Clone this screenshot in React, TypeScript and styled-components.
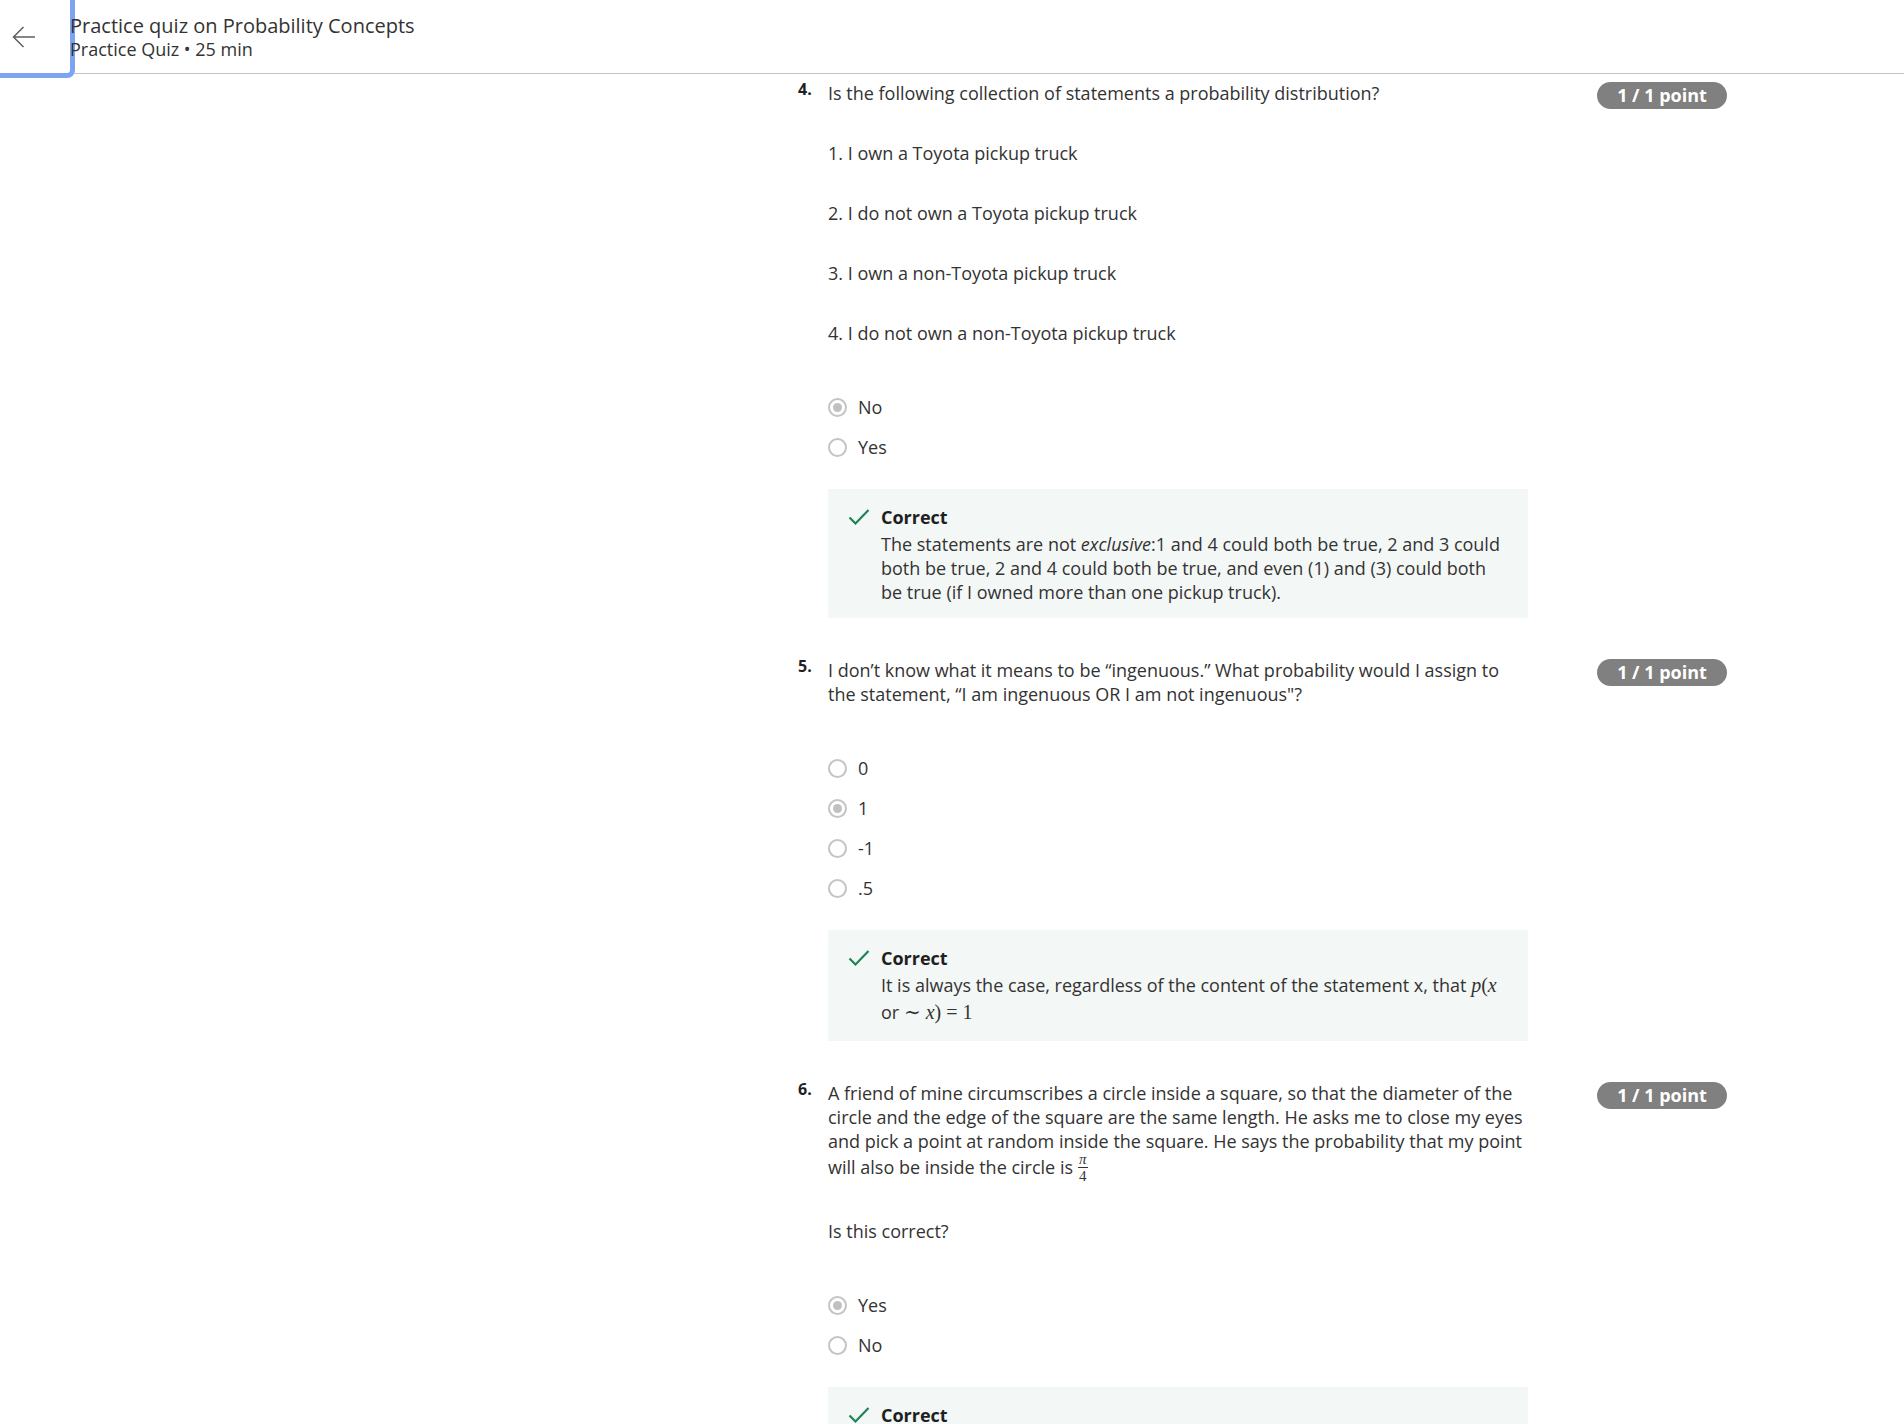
import styled, { createGlobalStyle } from 'styled-components';

const GlobalStyle = createGlobalStyle`
  body {
    margin: 0;
    background: #fff;
    font-family: "Open Sans", "Noto Sans", sans-serif;
    color: #333;
  }
  * { box-sizing: border-box; }
`

const Header = styled.header`
  display: flex;
  align-items: stretch;
  height: 74px;
  border-bottom: 1px solid #c4c4c4;
  background: #fff;
`

const BackButton = styled.button`
  flex: none;
  width: 70px;
  height: 73px;
  display: flex;
  align-items: center;
  padding: 0 0 0 12px;
  background: #fff;
  border: none;
  border-radius: 0 0 3px 0;
  box-shadow: 0 0 0 5px #7ba5f3;
  cursor: pointer;
`

const TitleBlock = styled.div`
  display: flex;
  flex-direction: column;
  justify-content: center;
  padding-top: 1px;
`

const Title = styled.div`
  font-size: 20px;
  line-height: 24px;
  color: #333;
`

const Subtitle = styled.div`
  font-size: 18px;
  line-height: 23px;
  color: #333;
`

const Main = styled.main`
  padding: 7px 0 0 798px;
`

const Question = styled.section`
  display: grid;
  grid-template-columns: 30px 700px auto;
  align-items: start;
  margin-bottom: 40px;
`

const Number = styled.div`
  font-size: 16px;
  line-height: 17px;
  font-weight: 700;
  color: #1f1f1f;
`

const Body = styled.div`
  font-size: 18px;
  line-height: 24px;
  color: #333;
`

const Prompt = styled.div`
  margin-bottom: 50px;

  p {
    margin: 0 0 36px;
  }
  p:last-child {
    margin-bottom: 0;
  }
`

const Options = styled.div`
  display: flex;
  flex-direction: column;
  gap: 16px;
`

const Option = styled.label`
  display: flex;
  align-items: center;
  gap: 11px;
  height: 24px;
  cursor: pointer;
`

const Radio = styled.span<{ checked?: boolean }>`
  flex: none;
  width: 19px;
  height: 19px;
  border-radius: 50%;
  border: 2px solid #c4c4c4;
  display: flex;
  align-items: center;
  justify-content: center;

  &::after {
    content: '';
    display: ${p => (p.checked ? 'block' : 'none')};
    width: 9px;
    height: 9px;
    border-radius: 50%;
    background: #c0c0c0;
  }
`

const Feedback = styled.div`
  margin-top: 30px;
  display: flex;
  gap: 11px;
  padding: 16px 20px 14px 20px;
  background: #f3f7f5;
`

const CheckIcon = styled.svg`
  flex: none;
  margin-top: 3px;
`

const FeedbackTitle = styled.div`
  font-weight: 700;
  color: #1f1f1f;
  margin-bottom: 3px;
`

const Badge = styled.div`
  margin-left: 69px;
  margin-top: 0.5px;
  width: 130px;
  height: 27px;
  border-radius: 14px;
  background: #808080;
  color: #fff;
  font-size: 18px;
  font-weight: 700;
  line-height: 27px;
  text-align: center;
  white-space: nowrap;
`

const MathVar = styled.i`
  font-family: "Liberation Serif", "DejaVu Serif", serif;
  font-size: 20px;
`

const MathText = styled.span`
  font-family: "Liberation Serif", "DejaVu Serif", serif;
  font-size: 20px;
`

const MathLine = styled.span`
  display: inline-block;
  line-height: 30px;
`

const Fraction = styled.span`
  display: inline-block;
  vertical-align: -7px;
  margin-left: 5px;
  font-family: "Liberation Serif", "DejaVu Serif", serif;
  font-size: 15px;
  line-height: 13px;
  text-align: center;
`

const FracTop = styled.span`
  display: block;
  font-style: italic;
  padding: 0 1px 1px;
  border-bottom: 1px solid #333;
`

const FracBottom = styled.span`
  display: block;
  padding-top: 2px;
`

const Check = () => (
  <CheckIcon width="22" height="18" viewBox="0 0 22 18">
    <polyline points="1.5,9.5 7.5,15.5 20.5,2" fill="none" stroke="#1f8354" strokeWidth="2.2" />
  </CheckIcon>
)

type Opt = { label: string; checked?: boolean }

const OptionList = ({ items }: { items: Opt[] }) => (
  <Options>
    {items.map(o => (
      <Option key={o.label}>
        <Radio checked={o.checked} />
        {o.label}
      </Option>
    ))}
  </Options>
)

const CorrectBox = ({ children }: { children?: React.ReactNode }) => (
  <Feedback>
    <Check />
    <div>
      <FeedbackTitle>Correct</FeedbackTitle>
      {children}
    </div>
  </Feedback>
)

export default function App() {
  return (
    <>
      <GlobalStyle />
      <Header>
        <BackButton aria-label="Back">
          <svg width="24" height="22" viewBox="0 0 24 22">
            <path d="M23 11H1.5M11.5 1L1.5 11l10 10" fill="none" stroke="#5f5f5f" strokeWidth="1.5" />
          </svg>
        </BackButton>
        <TitleBlock>
          <Title>Practice quiz on Probability Concepts</Title>
          <Subtitle>Practice Quiz • 25 min</Subtitle>
        </TitleBlock>
      </Header>

      <Main>
        <Question>
          <Number>4.</Number>
          <Body>
            <Prompt>
              <p>Is the following collection of statements a probability distribution?</p>
              <p>1. I own a Toyota pickup truck</p>
              <p>2. I do not own a Toyota pickup truck</p>
              <p>3. I own a non-Toyota pickup truck</p>
              <p>4. I do not own a non-Toyota pickup truck</p>
            </Prompt>
            <OptionList items={[{ label: 'No', checked: true }, { label: 'Yes' }]} />
            <CorrectBox>
              The statements are not <i>exclusive</i>:1 and 4 could both be true, 2 and 3 could both be
              true, 2 and 4 could both be true, and even (1) and (3) could both be true (if I owned more
              than one pickup truck).
            </CorrectBox>
          </Body>
          <Badge>1 / 1 point</Badge>
        </Question>

        <Question>
          <Number>5.</Number>
          <Body>
            <Prompt>
              <p>
                I don’t know what it means to be “ingenuous.” What probability would I assign to the
                statement, “I am ingenuous OR I am not ingenuous"?
              </p>
            </Prompt>
            <OptionList
              items={[{ label: '0' }, { label: '1', checked: true }, { label: '-1' }, { label: '.5' }]}
            />
            <CorrectBox>
              It is always the case, regardless of the content of the statement x, that{' '}
              <MathVar>p</MathVar>
              <MathText>(</MathText>
              <MathVar>x</MathVar>{' '}
              <MathLine>
                or <MathText>∼ </MathText>
                <MathVar>x</MathVar>
                <MathText>) = 1</MathText>
              </MathLine>
            </CorrectBox>
          </Body>
          <Badge>1 / 1 point</Badge>
        </Question>

        <Question>
          <Number>6.</Number>
          <Body>
            <Prompt>
              <p>
                A friend of mine circumscribes a circle inside a square, so that the diameter of the
                circle and the edge of the square are the same length. He asks me to close my eyes and
                pick a point at random inside the square. He says the probability that my point will
                also be inside the circle is
                <Fraction>
                  <FracTop>π</FracTop>
                  <FracBottom>4</FracBottom>
                </Fraction>
              </p>
              <p>Is this correct?</p>
            </Prompt>
            <OptionList items={[{ label: 'Yes', checked: true }, { label: 'No' }]} />
            <CorrectBox />
          </Body>
          <Badge>1 / 1 point</Badge>
        </Question>
      </Main>
    </>
  )
}
